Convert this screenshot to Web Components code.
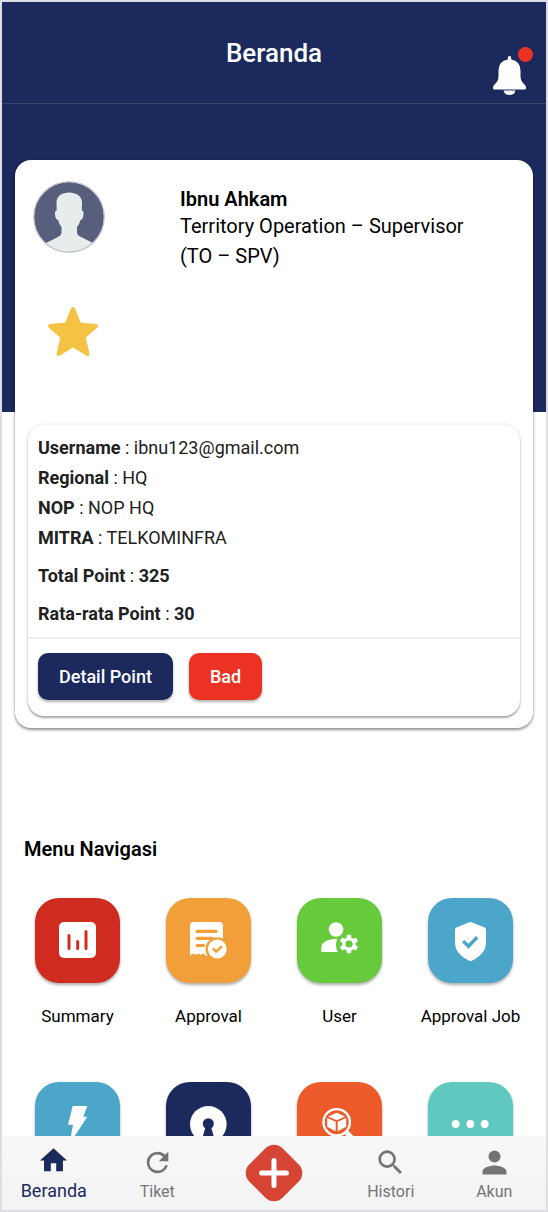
<!DOCTYPE html>
<html lang="id">
<head>
<meta charset="utf-8">
<meta name="viewport" content="width=device-width, initial-scale=1">
<title>Beranda</title>
<style>
  html { --navy: #1b295c; --red: #ec3323; --muted: #747474; }
  body { margin: 0; font-family: Roboto, "Liberation Sans", sans-serif; color: #000; background: #fff; }
</style>
</head>
<body>
<app-shell>
  <app-header slot="header">Beranda</app-header>

  <profile-card>
    <span slot="name">Ibnu Ahkam</span>
    <span slot="role">Territory Operation – Supervisor<br>(TO – SPV)</span>
    <info-row slot="info" label="Username">ibnu123@gmail.com</info-row>
    <info-row slot="info" label="Regional">HQ</info-row>
    <info-row slot="info" label="NOP">NOP HQ</info-row>
    <info-row slot="info" label="MITRA">TELKOMINFRA</info-row>
    <info-row slot="info" label="Total Point" strong>325</info-row>
    <info-row slot="info" label="Rata-rata Point" strong>30</info-row>
    <action-button slot="actions">Detail Point</action-button>
    <action-button slot="actions" variant="danger">Bad</action-button>
  </profile-card>

  <menu-grid heading="Menu Navigasi">
    <menu-tile label="Summary" style="--tile:#cf2c1f">
      <svg viewBox="0 0 85 85"><rect x="24" y="24" width="37" height="36" rx="5" fill="#fff"/><path d="M34 37.500V50.500M42.700 43.500V50.500M51 33.500V50.500" stroke="#cf2c1f" stroke-width="3" stroke-linecap="round"/></svg>
    </menu-tile>
    <menu-tile label="Approval" style="--tile:#f1a039">
      <svg viewBox="0 0 85 85"><path d="M24 28q0-4 4-4h25q4 0 4 4v30H40l-2-2.500-2.500 2.500-2.500-2.500-2.500 2.500-2.500-2.500-2 2.500L24 58z" fill="#fff"/><path d="M24 58l2.500-2.500 2.500 2.500 2.500-2.500 2.500 2.500 2.500-2.500 2.500 2.500v2H24z" fill="#f1a039"/><path d="M31 33.300H50M31 40.300H46M31 47.500H37.500" stroke="#f1a039" stroke-width="3.200" stroke-linecap="round"/><circle cx="51.300" cy="51" r="11.800" fill="#f1a039"/><circle cx="51.300" cy="51" r="9.400" fill="#fff"/><path d="M47.500 51.200l2.700 2.500 5-4.800" fill="none" stroke="#f1a039" stroke-width="2.500" stroke-linecap="round" stroke-linejoin="round"/></svg>
    </menu-tile>
    <menu-tile label="User" style="--tile:#67c93c">
      <svg viewBox="0 0 85 85"><circle cx="39" cy="31.500" r="7.300" fill="#fff"/><path d="M24.300 54v-4.500q0-4 4-6 5-2.800 12-2.800-1.500 4-1.300 7 .2 3.500 1.800 6.300z" fill="#fff"/><g transform="translate(52 46)" fill="#fff"><circle r="6.800"/><rect x="-2.300" y="-9.300" width="4.600" height="18.600" rx="1"/><rect x="-2.300" y="-9.300" width="4.600" height="18.600" rx="1" transform="rotate(60)"/><rect x="-2.300" y="-9.300" width="4.600" height="18.600" rx="1" transform="rotate(120)"/><circle r="3.600" fill="#67c93c"/></g></svg>
    </menu-tile>
    <menu-tile label="Approval Job" style="--tile:#4ca6ca">
      <svg viewBox="0 0 85 85"><path d="M40.800 24.500q1.500-.8 3 0l12.400 4.700q1.800.7 1.800 2.600V44q0 6-3 10-4 5.300-11.300 8.800-1.200.6-2.400 0Q34 59.300 30 54q-3-4-3-10V31.800q0-1.900 1.800-2.600z" fill="#fff"/><path d="M36.300 44.300l4.200 4 7.500-7.800" fill="none" stroke="#4ca6ca" stroke-width="3.400" stroke-linecap="square"/></svg>
    </menu-tile>
    <menu-tile name="Listrik" style="--tile:#4ca6ca">
      <svg viewBox="0 0 85 85"><path d="M37.700 24H52.300L48.300 34.700H52.300L34.500 62 38 42.700H33z" fill="#fff"/></svg>
    </menu-tile>
    <menu-tile name="Akses" style="--tile:#1b295c">
      <svg viewBox="0 0 85 85"><circle cx="42.300" cy="42.300" r="18.300" fill="#fff"/><circle cx="42.300" cy="41.700" r="5.500" fill="#1b295c"/><path d="M39.800 44h5l3 10.500-.5 6.500h-10l-.5-6.500z" fill="#1b295c"/></svg>
    </menu-tile>
    <menu-tile name="Inventaris" style="--tile:#ec5b29">
      <svg viewBox="0 0 85 85"><circle cx="39.700" cy="40.300" r="13.200" fill="none" stroke="#fff" stroke-width="2.400"/><path d="M49.500 50.500l9 9" stroke="#fff" stroke-width="5"/><path d="M39.700 30.700l8.500 3.800-8.500 3.800-8.500-3.800zM30.200 36l8.500 3.800v9.400l-8.500-4.500zM49.200 36l-8.500 3.800v9.400l8.500-4.500z" fill="#fff"/></svg>
    </menu-tile>
    <menu-tile name="Lainnya" style="--tile:#5fc9bf">
      <svg viewBox="0 0 85 85" fill="#fff"><circle cx="27.700" cy="42" r="3.900"/><circle cx="42.300" cy="42" r="3.900"/><circle cx="56.700" cy="42" r="3.900"/></svg>
    </menu-tile>
  </menu-grid>

  <nav-bar slot="footer">
    <nav-item label="Beranda" active><svg viewBox="2 2 20 20"><path d="M10 20v-6h4v6h5v-8h3L12 3 2 12h3v8z"/></svg></nav-item>
    <nav-item label="Tiket"><svg viewBox="2 2 20 20"><path d="M17.650 6.350A7.958 7.958 0 0 0 12 4a8 8 0 1 0 7.730 10h-2.080A5.990 5.990 0 0 1 12 18a6 6 0 1 1 0-12c1.660 0 3.140.69 4.220 1.780L13 11h7V4z"/></svg></nav-item>
    <add-button></add-button>
    <nav-item label="Histori"><svg viewBox="2 2 20 20"><path d="M15.500 14h-.79l-.28-.27A6.471 6.471 0 0 0 16 9.500 6.500 6.500 0 1 0 9.500 16c1.610 0 3.090-.59 4.230-1.570l.27.28v.79l5 4.990L20.490 19zm-6 0a4.500 4.500 0 1 1 0-9 4.500 4.500 0 0 1 0 9z"/></svg></nav-item>
    <nav-item label="Akun"><svg viewBox="3 3 18 18"><path d="M12 12a4 4 0 1 0 0-8 4 4 0 0 0 0 8zm0 2c-2.670 0-8 1.340-8 4v2h16v-2c0-2.660-5.330-4-8-4z"/></svg></nav-item>
  </nav-bar>
</app-shell>

<script>
  const define = (name, html, setup) => {
    const template = document.createElement('template');
    template.innerHTML = html;
    customElements.define(name, class extends HTMLElement {
      constructor() {
        super();
        this.attachShadow({ mode: 'open' }).append(template.content.cloneNode(true));
      }
      connectedCallback() { if (setup) setup(this, this.shadowRoot); }
    });
  };

  define('app-shell', `
    <style>
      :host { display: flex; flex-direction: column; height: 100vh; box-sizing: border-box; border: 2px solid #dcdee4; }
      main { flex: 1; min-height: 0; overflow-y: auto; scrollbar-width: none; background: linear-gradient(var(--navy) 308px, #fff 308px); }
    </style>
    <slot name="header"></slot><main><slot></slot></main><slot name="footer"></slot>`);

  define('app-header', `
    <style>
      :host { display: grid; grid-template-columns: 1fr auto 1fr; align-items: center; height: 101px; background: var(--navy); color: #fff; border-bottom: 1px solid #39466f; }
      h1 { grid-column: 2; margin: 0; font-size: 26px; line-height: 32px; font-weight: 500; }
      button { position: relative; justify-self: end; align-self: end; margin: 0 20px 8px 0; padding: 0; border: 0; background: none; display: block; }
      svg { display: block; width: 33px; height: 39px; }
      i { position: absolute; top: -9px; right: -7px; width: 15px; height: 15px; border-radius: 50%; background: var(--red); }
    </style>
    <h1><slot></slot></h1>
    <button aria-label="Notifikasi">
      <svg viewBox="0 0 33 39" fill="#fff"><path d="M14.800 3.500V1.800q0-1.800 1.700-1.800t1.700 1.800v1.700q9.300 1.500 9.300 11.200v5.300q0 5 3 7.500 2.500 2 2.500 3.700v1q0 1.300-1.600 1.300H1.600Q0 33.500 0 32.200v-1q0-1.700 2.500-3.700 3-2.500 3-7.500v-5.300Q5.500 5 14.800 3.500zM10.500 34.500h12q-1 4.500-6 4.500t-6-4.500z"/></svg>
      <i></i>
    </button>`);

  define('profile-card', `
    <style>
      :host { display: block; margin: 56px 13px 0; padding: 0 13px 12px; border-radius: 16px; background: #fff; box-shadow: 0 2px 3px rgba(0,0,0,.4), 0 0 3px rgba(0,0,0,.14); }
      header { display: grid; grid-template-columns: 72px 1fr; column-gap: 75px; min-height: 244px; padding: 21px 5px 0; }
      .left { display: flex; flex-direction: column; align-items: center; gap: 53px; }
      .avatar { display: block; width: 72px; height: 72px; }
      .star { display: block; width: 52px; height: 52px; margin-left: 8px; }
      h2 { margin: 6px 0 0; font-size: 20px; line-height: 24px; font-weight: 600; }
      p { margin: 0; font-size: 20px; line-height: 30px; }
      section { border-radius: 16px; background: #fff; box-shadow: 0 2px 2px rgba(0,0,0,.3), 0 0 4px rgba(0,0,0,.12); }
      .info { display: flex; flex-direction: column; padding: 8px 10px; }
      footer { display: flex; gap: 16px; padding: 14px 10px 16px; border-top: 2px solid #eee; }
    </style>
    <header>
      <div class="left">
        <svg class="avatar" viewBox="0 0 72 72" role="img" aria-label="Foto profil">
          <defs><clipPath id="round"><circle cx="36" cy="36" r="35"/></clipPath></defs>
          <circle cx="36" cy="36" r="35" fill="#585f7d"/>
          <path clip-path="url(#round)" d="M36 11.500c-7 0-12.500 3.500-12.500 10l.2 8q-2 0-1.700 4 .5 5 3 5.500 1 4 3.500 7v5.500q0 2.500-3.500 4.500L13 62v12h47V62l-12-6q-4-2-4-4.500V46q2.500-3 3.500-7 2.500-.5 3-5.500.3-4-1.700-4l.2-8c0-6.500-6-10-13-10z" fill="#e7eded"/>
          <circle cx="36" cy="36" r="35.300" fill="none" stroke="#c3c6cc" stroke-width="1.200"/>
        </svg>
        <svg class="star" viewBox="0 0 52 52" role="img" aria-label="Bintang"><path d="M26 3l6.500 15.500L49 20 36.500 31l4 17L26 39l-14.500 9 4-17L3 20l16.500-1.500z" fill="#f5c244" stroke="#f5c244" stroke-width="4" stroke-linejoin="round"/></svg>
      </div>
      <div><h2><slot name="name"></slot></h2><p><slot name="role"></slot></p></div>
    </header>
    <section>
      <div class="info"><slot name="info"></slot></div>
      <footer><slot name="actions"></slot></footer>
    </section>`);

  define('info-row', `
    <style>
      :host { display: block; font-size: 18px; line-height: 30px; color: #212121; }
      :host([strong]) { margin-top: 8px; }
      b { font-weight: 700; }
      :host([strong]) .value { font-weight: 700; }
    </style>
    <b></b> : <span class="value"><slot></slot></span>`,
    (el, root) => { root.querySelector('b').textContent = el.getAttribute('label'); });

  define('action-button', `
    <style>
      :host { display: block; }
      button { display: block; height: 47px; padding: 0 21px; border: 0; border-radius: 10px; background: var(--navy); color: #fff; font: 500 18px/24px Roboto, sans-serif; box-shadow: 0 2px 3px rgba(0,0,0,.3); }
      :host([variant=danger]) button { background: var(--red); }
    </style>
    <button><slot></slot></button>`);

  define('menu-grid', `
    <style>
      :host { display: block; padding: 109px 10px 24px; }
      h2 { margin: 0 0 37px 12px; font-size: 20px; line-height: 24px; font-weight: 600; }
      div { display: grid; grid-template-columns: repeat(4, 1fr); row-gap: 54px; }
    </style>
    <h2></h2><div><slot></slot></div>`,
    (el, root) => { root.querySelector('h2').textContent = el.getAttribute('heading'); });

  define('menu-tile', `
    <style>
      :host { display: block; }
      a { display: flex; flex-direction: column; align-items: center; gap: 21px; min-height: 130px; color: #000; text-decoration: none; font-size: 17px; line-height: 24px; white-space: nowrap; }
      .tile { width: 85px; height: 85px; border-radius: 24px; background: var(--tile); box-shadow: 0 2px 3px rgba(0,0,0,.32); }
      ::slotted(svg) { display: block; width: 85px; height: 85px; }
    </style>
    <a href="#"><span class="tile"><slot></slot></span></a>`,
    (el, root) => {
      const link = root.querySelector('a');
      if (el.hasAttribute('label')) {
        const text = document.createElement('span');
        text.textContent = el.getAttribute('label');
        link.append(text);
      } else link.setAttribute('aria-label', el.getAttribute('name'));
    });

  define('nav-bar', `
    <style>
      :host { display: block; }
      nav { display: grid; grid-template-columns: 1fr 1fr 130px 1fr 1fr; height: 74px; background: linear-gradient(#f8f8f8, #f3f3f3); }
    </style>
    <nav><slot></slot></nav>`);

  define('nav-item', `
    <style>
      :host { display: block; color: var(--muted); }
      a { display: flex; flex-direction: column; align-items: center; gap: 4px; padding-top: 13px; color: inherit; text-decoration: none; font-size: 16px; line-height: 24px; }
      :host([active]) { color: var(--navy); }
      :host([active]) a { font-size: 18px; padding-top: 11px; gap: 5px; }
      ::slotted(svg) { display: block; width: 27px; height: 27px; fill: currentColor; }
    </style>
    <a href="#"><slot></slot><span></span></a>`,
    (el, root) => {
      root.querySelector('span').textContent = el.getAttribute('label');
      if (el.hasAttribute('active')) root.querySelector('a').setAttribute('aria-current', 'page');
    });

  define('add-button', `
    <style>
      :host { display: flex; justify-content: center; align-items: center; }
      button { padding: 0; border: 0; background: none; }
      svg { display: block; width: 58px; height: 58px; }
    </style>
    <button aria-label="Tambah"><svg viewBox="0 0 58 58"><rect x="5.500" y="5.500" width="47" height="47" rx="12" fill="#d64433" transform="rotate(45 29 29)"/><path d="M29 16.500v25M16.500 29h25" stroke="#fff" stroke-width="5" stroke-linecap="round"/></svg></button>`);
</script>
</body>
</html>
